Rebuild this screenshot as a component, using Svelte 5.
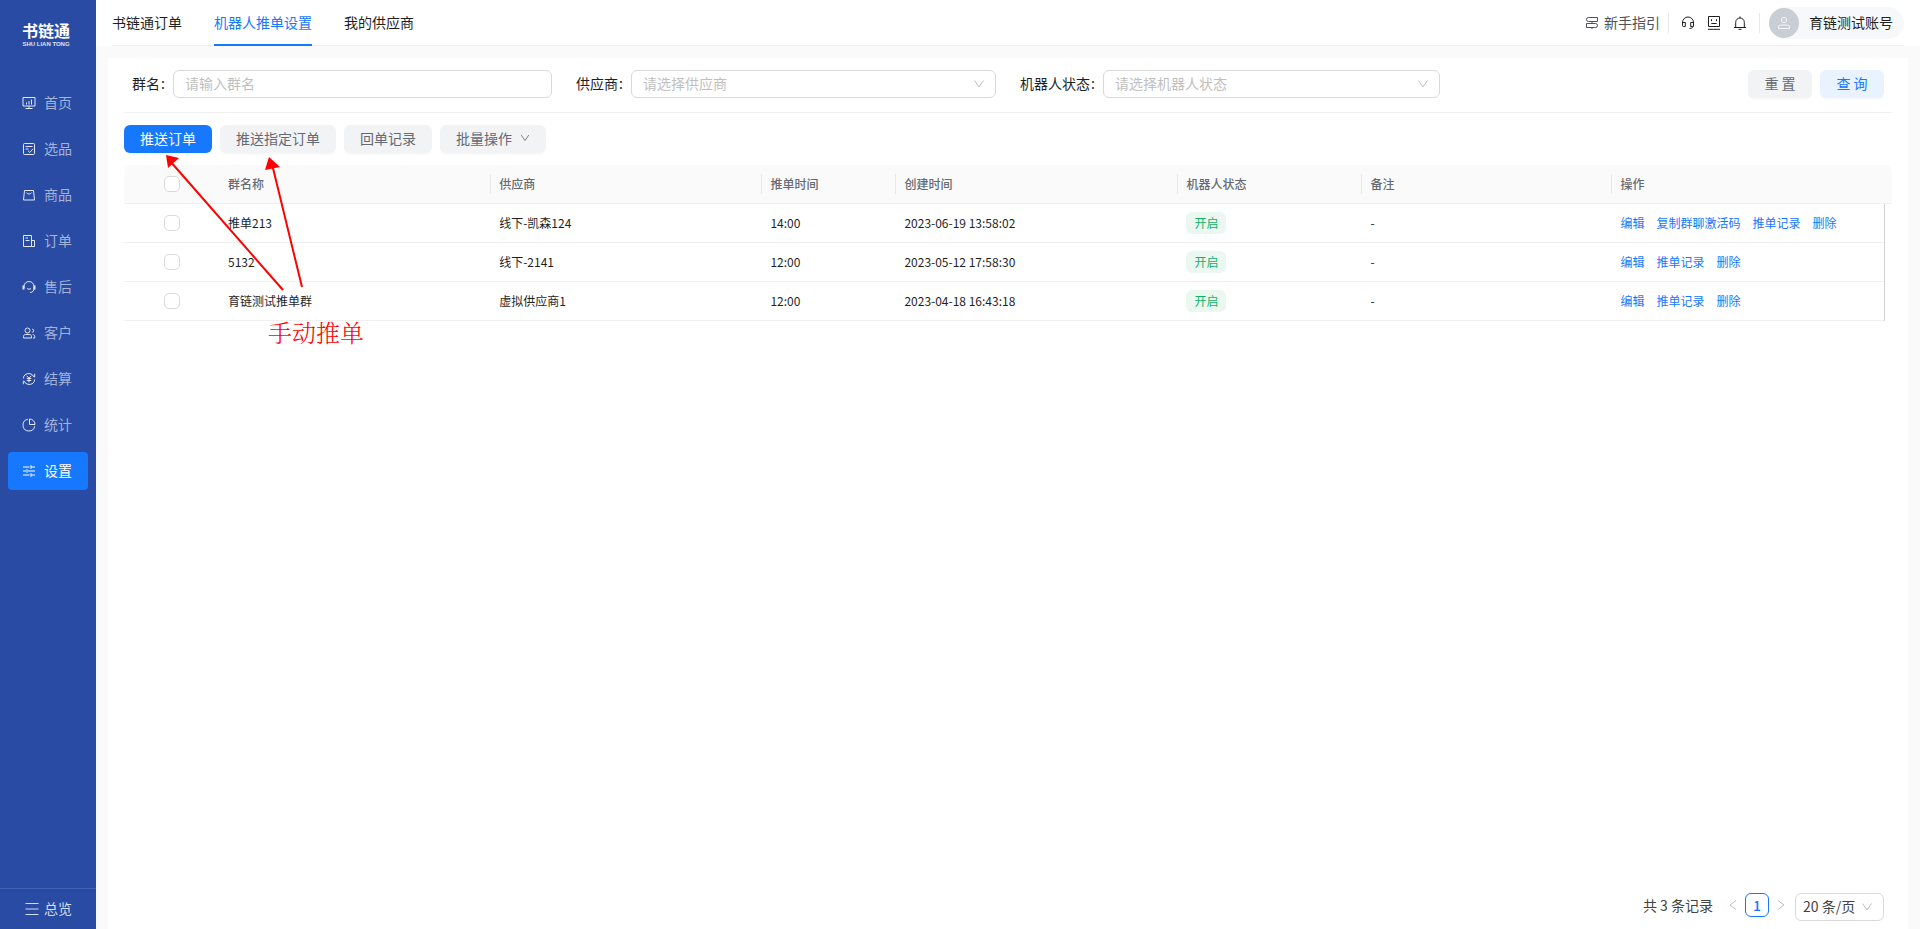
<script>
  const menu = [
    { label: '首页', icon: 'home' },
    { label: '选品', icon: 'pick' },
    { label: '商品', icon: 'goods' },
    { label: '订单', icon: 'order' },
    { label: '售后', icon: 'service' },
    { label: '客户', icon: 'customer' },
    { label: '结算', icon: 'settle' },
    { label: '统计', icon: 'stats' },
    { label: '设置', icon: 'settings', active: true }
  ];

  const tabs = [
    { label: '书链通订单' },
    { label: '机器人推单设置', active: true },
    { label: '我的供应商' }
  ];

  const columns = ['群名称', '供应商', '推单时间', '创建时间', '机器人状态', '备注'];

  const rows = [
    {
      name: '推单213', supplier: '线下-凯森124', push: '14:00', created: '2023-06-19 13:58:02',
      status: '开启', note: '-', actions: ['编辑', '复制群聊激活码', '推单记录', '删除']
    },
    {
      name: '5132', supplier: '线下-2141', push: '12:00', created: '2023-05-12 17:58:30',
      status: '开启', note: '-', actions: ['编辑', '推单记录', '删除']
    },
    {
      name: '育链测试推单群', supplier: '虚拟供应商1', push: '12:00', created: '2023-04-18 16:43:18',
      status: '开启', note: '-', actions: ['编辑', '推单记录', '删除']
    }
  ];
</script>

{#snippet menuIcon(name)}
  <svg class="icon" viewBox="0 0 14 14" aria-hidden="true">
    {#if name === 'home'}
      <path d="M1 1.500h12v8.500H1zM4.500 8.500V6.500M7 8.500V5M9.500 8.500V3.500M7 10v2.500M3.500 12.500h7" />
    {:else if name === 'pick'}
      <rect x="1.500" y="1.500" width="11" height="11" rx="1" />
      <path d="M3.500 4.500h7M3.500 7h3M6 8.800l1.800 1.700L11 6.800" />
    {:else if name === 'goods'}
      <path d="M2.500 2.500h9l1 9.500h-11zM4.300 4.500c1 2 4.400 2 5.400 0" />
    {:else if name === 'order'}
      <path d="M9.500 12.500h-8v-11h8zM9.500 6.500h3v6h-3M3.500 4h2.500M3.500 6.500h4" />
    {:else if name === 'service'}
      <path d="M2 8V6.500a5 5 0 0 1 10 0V8c0 3-1.500 4.500-4 4.500M5 8.300c.8 1.200 3.200 1.200 4 0" />
      <path class="thick" d="M1.500 5.500v4M12.500 5.500v4" />
    {:else if name === 'customer'}
      <circle cx="5.500" cy="4.500" r="2.500" />
      <path d="M1.500 12v-1.500c0-1.200.8-2 2-2h4c1.200 0 2 .8 2 2V12zM10.200 3.200a1.500 1.500 0 1 1 0 3M10.800 8.500c1.200.1 1.900.9 1.900 2V12H11" />
    {:else if name === 'settle'}
      <path d="M3 2.800A5.800 5.800 0 0 1 12 5M11 11.200A5.800 5.800 0 0 1 2 9M1.300 6.500A5.500 5.500 0 0 1 3 2.800M12.700 7.500A5.500 5.500 0 0 1 11 11.200M12.700 1.800V5.300M1.300 12.200V8.700" />
      <path d="M4.800 3.800L7 6.300l2.200-2.500M7 6.300v4M4.800 6.500h4.400M4.800 8.500h4.400" />
    {:else if name === 'stats'}
      <path d="M5.800 1.300A5.900 5.900 0 1 0 12.700 8.200" />
      <path d="M7.500 1v5.500H13A5.500 5.500 0 0 0 7.500 1z" />
    {:else if name === 'settings'}
      <path d="M1 3h6.500M9 3h4M9 1.200v3.600M1 7h3M5 5.200v3.600M6 7h7M1 11h6.500M9 11h4M9 9.200v3.600" />
    {/if}
  </svg>
{/snippet}

{#snippet chevron()}
  <svg class="chevron" viewBox="0 0 12 12" aria-hidden="true"><path d="M1.500 2.500L6 9l4.500-6.500" /></svg>
{/snippet}

<div class="app">
  <aside class="sidebar">
    <div class="logo">
      <strong>书链通</strong>
      <small>SHU LIAN TONG</small>
    </div>
    <nav class="menu" aria-label="主菜单">
      {#each menu as item}
        <a href="#{item.icon}" class:active={item.active}>
          {@render menuIcon(item.icon)}
          <span class="text">{item.label}</span>
        </a>
      {/each}
    </nav>
    <button class="overview" type="button">
      <svg class="icon" viewBox="0 0 14 14" aria-hidden="true"><path d="M.5 1.500h13M.5 7h13M.5 12.500h13" /></svg>
      <span class="text">总览</span>
    </button>
  </aside>

  <div class="main">
    <header class="header">
      <div class="header-inner">
        <nav class="tabs" aria-label="页签">
          {#each tabs as tab}
            <a href="#tab" class:active={tab.active}>{tab.label}</a>
          {/each}
        </nav>
        <div class="tools">
          <a class="guide" href="#guide">
            <svg class="icon" viewBox="0 0 14 14" aria-hidden="true">
              <path d="M3.500 1.500h9v4h-9a2 2 0 0 1 0-4zM1.500 7.500h9a2 2 0 0 1 0 4h-9zM7 5.500v2M7 11.500V13" />
            </svg>
            <span class="text">新手指引</span>
          </a>
          <div class="shortcuts">
            <button type="button" aria-label="客服">
              <svg class="icon" viewBox="0 0 14 14" aria-hidden="true">
                <path d="M1.500 9V6.500a5.500 5.500 0 0 1 11 0V9c0 2-1.500 3.500-4 3.500" />
                <path d="M1.500 6.500h2.800v4H2.500a1 1 0 0 1-1-1zM12.500 6.500H9.700v4h1.800a1 1 0 0 0 1-1z" />
              </svg>
            </button>
            <button type="button" aria-label="反馈">
              <svg class="icon" viewBox="0 0 14 14" aria-hidden="true">
                <path d="M1.500.5h11v10h-11zM1 13.300h12M4.500 3.200v2M9.500 3.200v2M4.300 7.500h5.400" />
              </svg>
            </button>
            <button type="button" aria-label="通知">
              <svg class="icon" viewBox="0 0 14 14" aria-hidden="true">
                <path d="M7 .5v1.500M2.700 11.500V6.300a4.300 4.300 0 0 1 8.600 0v5.200M1 11.500h12M5.500 13.300h3" />
              </svg>
            </button>
          </div>
          <button class="account" type="button">
            <span class="avatar">
              <svg class="icon" viewBox="0 0 14 14" aria-hidden="true">
                <circle cx="7" cy="4" r="2.600" />
                <path d="M1.500 12.500V11c0-1.200.8-2 2-2h7c1.200 0 2 .8 2 2v1.500z" />
              </svg>
            </span>
            <span class="text">育链测试账号</span>
          </button>
        </div>
      </div>
    </header>

    <main class="panel">
      <form class="filters">
        <div class="field">
          <label class="text" for="group">群名<span class="colon">:</span></label>
          <input id="group" type="text" placeholder="请输入群名" />
        </div>
        <div class="field">
          <label class="text" for="supplier">供应商<span class="colon">:</span></label>
          <div class="select">
            <select id="supplier"><option>请选择供应商</option></select>
            {@render chevron()}
          </div>
        </div>
        <div class="field">
          <label class="text" for="status">机器人状态<span class="colon">:</span></label>
          <div class="select">
            <select id="status"><option>请选择机器人状态</option></select>
            {@render chevron()}
          </div>
        </div>
        <div class="submit">
          <button class="btn" type="reset">重 置</button>
          <button class="btn soft" type="button">查 询</button>
        </div>
      </form>

      <div class="toolbar">
        <button class="btn primary" type="button">推送订单</button>
        <button class="btn" type="button">推送指定订单</button>
        <button class="btn" type="button">回单记录</button>
        <button class="btn" type="button">批量操作 {@render chevron()}</button>
      </div>

      <table>
        <colgroup>
          <col class="c-check" /><col class="c-name" /><col class="c-name" /><col class="c-push" />
          <col class="c-created" /><col class="c-status" /><col class="c-note" /><col /><col class="c-gutter" />
        </colgroup>
        <thead>
          <tr>
            <th class="check"><input type="checkbox" aria-label="全选" /></th>
            {#each columns as column}
              <th><span class="split">{column}</span></th>
            {/each}
            <th colspan="2">操作</th>
          </tr>
        </thead>
        <tbody>
          {#each rows as row}
            <tr>
              <td class="check"><input type="checkbox" aria-label="选择 {row.name}" /></td>
              <td>{row.name}</td>
              <td>{row.supplier}</td>
              <td>{row.push}</td>
              <td>{row.created}</td>
              <td><span class="tag">{row.status}</span></td>
              <td>{row.note}</td>
              <td>
                <div class="actions">
                  {#each row.actions as action}<a href="#action">{action}</a>{/each}
                </div>
              </td>
              <td class="gutter"></td>
            </tr>
          {/each}
        </tbody>
      </table>

      <footer class="pagination">
        <span class="total">共 3 条记录</span>
        <button class="step" type="button" aria-label="上一页">
          <svg viewBox="0 0 12 12" aria-hidden="true"><path d="M9 1.500L3 6l6 4.500" /></svg>
        </button>
        <button class="page" type="button">1</button>
        <button class="step" type="button" aria-label="下一页">
          <svg viewBox="0 0 12 12" aria-hidden="true"><path d="M3 1.500L9 6l-6 4.500" /></svg>
        </button>
        <div class="select size">
          <select aria-label="每页条数"><option>20 条/页</option></select>
          {@render chevron()}
        </div>
      </footer>

      <!-- Callout drawn over the toolbar and the table -->
      <div class="callout">
        <svg viewBox="0 0 160 140" aria-hidden="true">
          <path class="line" d="M12 7L125 136M114 10L144 133" />
          <path class="head" d="M8 1l13 3-11 10zM111 3l11 10-15 3z" />
        </svg>
        <span>手动推单</span>
      </div>
    </main>
  </div>
</div>

<style>
  :global(body) {
    margin: 0;
  }

  .app {
    display: flex;
    min-height: 100vh;
    background: #fafafa;
    color: #1f1f1f;
    font: 14px/22px 'Noto Sans CJK SC', sans-serif;
  }

  .app *,
  .app *::before,
  .app *::after {
    box-sizing: border-box;
  }

  a {
    color: inherit;
    text-decoration: none;
  }

  button,
  input,
  select {
    margin: 0;
    font: inherit;
    color: inherit;
  }

  button {
    padding: 0;
    border: 0;
    background: none;
    cursor: pointer;
    white-space: nowrap;
  }

  svg {
    display: block;
    flex: none;
    fill: none;
    stroke: currentColor;
  }

  .icon {
    width: 14px;
    height: 14px;
  }

  /* CJK glyphs sit low in their line box; this centres them beside icons and boxes */
  .text {
    padding-bottom: 2px;
  }

  .thick {
    stroke-width: 2;
  }

  .chevron {
    width: 12px;
    height: 12px;
  }

  /* Sidebar */
  .sidebar {
    display: flex;
    flex: none;
    flex-direction: column;
    width: 96px;
    background: #294ba3;
    color: #a3b3da;
  }

  .logo {
    display: flex;
    flex-direction: column;
    align-items: center;
    height: 84px;
    padding: 21px 4px 0 0;
    color: #fff;
  }

  .logo strong {
    font-size: 16px;
    line-height: 19px;
  }

  .logo small {
    font: bold 6px/8px 'Liberation Sans', sans-serif;
    color: #dfe5f4;
    white-space: nowrap;
  }

  .menu {
    display: flex;
    flex: 1;
    flex-direction: column;
    gap: 8px;
    padding: 0 8px;
  }

  .menu a {
    display: flex;
    align-items: center;
    gap: 8px;
    height: 38px;
    padding-left: 14px;
    border-radius: 4px;
  }

  .menu .icon {
    color: #e4e9f5;
  }

  .menu a.active,
  .menu a.active .icon {
    color: #fff;
  }

  .menu a.active {
    background: #1677ff;
  }

  .overview {
    display: flex;
    align-items: center;
    gap: 5px;
    height: 41px;
    padding-left: 25px;
    border-top: 1px solid #4564b0;
    color: #d4dbed;
  }

  /* Header */
  .main {
    display: flex;
    flex: 1;
    flex-direction: column;
    min-width: 0;
  }

  .header {
    padding: 0 16px;
    background: #fff;
  }

  .header-inner {
    display: flex;
    justify-content: space-between;
    height: 46px;
    border-bottom: 1px solid #f0f0f0;
  }

  .tabs {
    display: flex;
    gap: 32px;
    height: 46px;
  }

  .tabs a {
    padding-top: 11px;
    border-bottom: 2px solid transparent;
  }

  .tabs a.active {
    border-color: #1677ff;
    color: #1677ff;
  }

  .tools,
  .guide,
  .shortcuts,
  .account {
    display: flex;
    align-items: center;
  }

  .guide {
    gap: 5px;
    padding-right: 8px;
    color: #4e5259;
  }

  .shortcuts {
    gap: 12px;
    height: 20px;
    margin-right: 9px;
    padding: 0 12px;
    border: solid #e8e8e8;
    border-width: 0 1px;
  }

  .account {
    gap: 10px;
    height: 32px;
    padding-right: 11px;
    border-radius: 16px;
    background: #f7f8fa;
  }

  .avatar {
    display: grid;
    place-items: center;
    width: 30px;
    height: 30px;
    border-radius: 50%;
    background: #c9cdd4;
    color: #f4f5f7;
  }

  /* Content */
  .panel {
    position: relative;
    display: flex;
    flex: 1;
    flex-direction: column;
    margin: 12px 12px 0;
    padding: 12px 16px 8px;
    background: #fff;
  }

  .filters {
    display: grid;
    grid-template-columns: repeat(4, 1fr);
    gap: 24px;
    padding: 0 8px 14px;
    border-bottom: 1px solid #f0f0f0;
  }

  .field {
    display: flex;
    align-items: center;
    min-width: 0;
  }

  .field label {
    white-space: nowrap;
  }

  .colon {
    display: inline-block;
    width: 5px;
    margin-right: 8px;
    padding-left: 1px;
  }

  .field input,
  select {
    width: 100%;
    min-width: 0;
    height: 28px;
    padding: 0 11px 2px;
    border: 1px solid #d9d9d9;
    border-radius: 6px;
    outline: 0;
    background: #fff;
  }

  .field input {
    flex: 1;
  }

  .field input::placeholder {
    color: #bfbfbf;
    opacity: 1;
  }

  .select {
    position: relative;
    flex: 1;
    min-width: 0;
  }

  .select select {
    appearance: none;
    color: #bfbfbf;
  }

  .select .chevron {
    position: absolute;
    top: 8px;
    right: 11px;
    color: #bfbfbf;
    pointer-events: none;
  }

  .submit,
  .toolbar {
    display: flex;
    gap: 8px;
  }

  .submit {
    justify-content: flex-end;
  }

  .btn {
    display: flex;
    align-items: center;
    justify-content: center;
    gap: 8px;
    min-width: 64px;
    height: 28px;
    padding: 0 16px 2px;
    border-radius: 6px;
    background: #f2f3f5;
    box-shadow: 0 2px 0 rgba(0, 0, 0, 0.02);
    color: #646a73;
  }

  .btn .chevron {
    width: 10px;
    height: 10px;
  }

  .btn.primary {
    background: #1677ff;
    color: #fff;
  }

  .btn.soft {
    background: #e8f3ff;
    color: #1677ff;
  }

  .toolbar {
    padding: 12px 0;
  }

  /* Table */
  table {
    width: 100%;
    border-collapse: separate;
    border-spacing: 0;
    table-layout: fixed;
    font-size: 12px;
    line-height: 20px;
  }

  .c-check {
    width: 96px;
  }

  .c-name {
    width: 15.34%;
  }

  .c-push {
    width: 7.58%;
  }

  .c-created {
    width: 15.95%;
  }

  .c-status {
    width: 10.41%;
  }

  .c-note {
    width: 14.14%;
  }

  .c-gutter {
    width: 8px;
  }

  th,
  td {
    height: 39px;
    padding: 0 8px;
    border-bottom: 1px solid #f0f0f0;
    text-align: left;
    white-space: nowrap;
  }

  th {
    background: #fafafa;
    color: #646a73;
    font-weight: 500;
  }

  th:first-child {
    border-top-left-radius: 8px;
  }

  th:last-child {
    border-top-right-radius: 8px;
  }

  .split {
    display: block;
    margin-right: -8px;
    border-right: 1px solid #e8e8e8;
  }

  .check {
    text-align: center;
  }

  .check input {
    display: block;
    width: 16px;
    height: 16px;
    margin: 0 auto;
    border: 1px solid #d9d9d9;
    border-radius: 5px;
    appearance: none;
    background: #fff;
  }

  .gutter {
    padding: 0;
    border-bottom: 0;
    border-left: 1px solid #d0d3d6;
  }

  .tag {
    display: inline-block;
    padding: 1px 8px;
    border-radius: 6px;
    background: #ebf8f2;
    color: #10b265;
    vertical-align: middle;
  }

  .actions {
    display: flex;
    gap: 12px;
    color: #1677ff;
  }

  /* Pagination */
  .pagination {
    display: flex;
    align-items: flex-start;
    justify-content: flex-end;
    margin-top: auto;
    padding-right: 8px;
    line-height: 24px;
  }

  .total {
    margin-right: 8px;
    color: #434343;
  }

  .step {
    display: grid;
    place-items: center;
    width: 24px;
    height: 24px;
    color: #bfbfbf;
  }

  .step svg {
    width: 12px;
    height: 12px;
  }

  .page {
    width: 24px;
    height: 24px;
    border: 1px solid #1677ff;
    border-radius: 6px;
    color: #1677ff;
    font-weight: 500;
    line-height: 22px;
  }

  .size {
    flex: none;
    width: 89px;
    margin-left: 2px;
  }

  .size select {
    padding: 0 7px 2px;
    color: #434343;
  }

  /* Callout */
  .callout {
    position: absolute;
    top: 96px;
    left: 50px;
    width: 220px;
    color: #f00;
    pointer-events: none;
  }

  .callout svg {
    width: 160px;
    height: 140px;
  }

  .callout .line {
    stroke-width: 2;
  }

  .callout .head {
    fill: #f00;
    stroke: none;
  }

  .callout span {
    display: block;
    padding: 20px 0 0 110px;
    font: 300 24px/36px 'Noto Serif CJK SC', 'Noto Sans CJK SC', serif;
  }
</style>
